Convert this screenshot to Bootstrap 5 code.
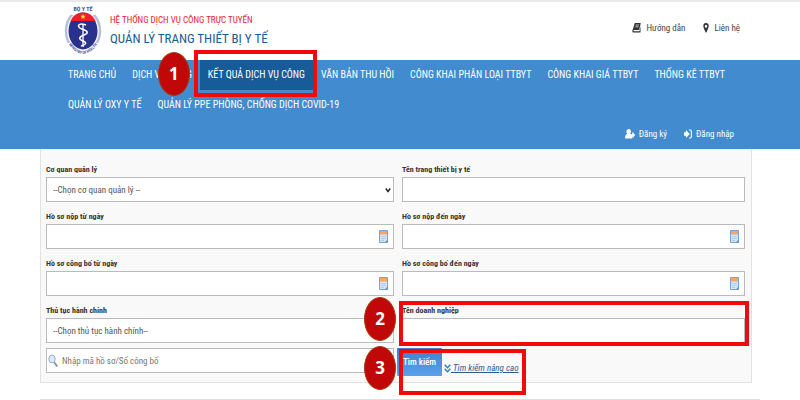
<!DOCTYPE html>
<html lang="vi">
<head>
<meta charset="utf-8">
<meta name="viewport" content="width=device-width, initial-scale=1">
<title>Quản lý trang thiết bị y tế</title>
<link href="https://cdn.jsdelivr.net/npm/bootstrap@5.3.0/dist/css/bootstrap.min.css" rel="stylesheet">
<style>
body{font-family:"Roboto Condensed",Roboto,sans-serif;font-size:9px;line-height:14px;color:#333;background:#fff}
.topbar{border-top:2px solid #e9e9e9;height:60px;padding:0 60px 0 64px}
.topbar a{color:#444}
.brand-sub{font-size:9px;line-height:16px;color:#e8222d}
.brand-title{font-size:13px;line-height:22px;font-weight:400;color:#1b5a96;margin:0}
.emblem{width:38px;height:54px}
.toplinks{gap:18px;padding-bottom:6px}
.toplinks a{gap:5px}
.mainbar{background:#428bce;padding:0 48px 0 60px}
.mainmenu .nav-link{color:#fff;font-size:10px;line-height:14px;font-weight:400;padding:8px}
.mainmenu .nav-link.active{background:#175b98}
.userlinks{gap:17px;padding:7px 18px 8px}
.userlinks a{color:#fff}
.panel-wrap{padding:0 6% 0 5%}
.filter{background:#f9f9f9;border:1px solid #e2e2e2;border-top:0;padding:14px 6px 6px 5px}
.fields{display:grid;grid-template-columns:348fr 343fr;column-gap:8px;row-gap:8px}
.fields label{display:block;font-size:8px;line-height:14px;font-weight:700;color:#333}
.fields .form-control,.fields .form-select{font-size:9px;line-height:14px;height:25px;min-height:0;padding:0 8px;border:1px solid #b9bcbe;border-radius:0;color:#555;background-color:#fff}
.fields .form-select{appearance:none;padding-right:20px;padding-left:6px;background-image:url("data:image/svg+xml,%3Csvg xmlns='http://www.w3.org/2000/svg' viewBox='0 0 8 6'%3E%3Cpath d='M1 1l3 4 3-4' fill='none' stroke='%23222' stroke-width='1.8'/%3E%3C/svg%3E");background-size:6px 6px;background-position:right 2px center}
.fields input::placeholder{color:#777;opacity:1}
.fields .code-input{padding-left:15px}
.in-icon{position:absolute;right:6px;top:6px;width:9px;height:13px}
.lens{position:absolute;left:2px;top:6px;width:10px;height:14px}
.last-row{margin-top:-3px}
.actions{margin-left:-5px;gap:2px}
.btn-search{background:linear-gradient(#3f7dd0,#58a2ec);color:#fff;font-size:9px;line-height:16px;font-weight:500;border:0;border-radius:1px;padding:6px 4px;min-width:45px}
.btn-search:hover{color:#fff;background:#3f7dd0}
.adv{color:#285d8c;font-style:italic;line-height:14px;margin-top:13px}
.mark-box{position:absolute;border:4px solid #f20a0a;pointer-events:none;z-index:2}
.box-menu{inset:-10px -4px -7px -6px}
.box-field{inset:-3px -4px -3px -3px}
.box-search{left:2px;top:1px;width:127px;height:46px}
.step{position:absolute;z-index:3;width:32px;height:44px;border-radius:50%;background:#c00808;border:1px solid #a53a10;color:#fff;font:700 17px/42px "Open Sans",sans-serif;text-align:center;pointer-events:none}
.step-one{left:-42px;top:-8px}
.step-two{left:-38px;top:-7px}
.step-three{left:-33px;top:-2px}
.bottom-rule{margin:16px 5% 0;border-top:1px solid #ddd}
</style>
</head>
<body>
<header class="topbar d-flex justify-content-between align-items-center">
  <div class="d-flex align-items-center gap-2">
    <svg class="emblem" viewBox="0 0 38 54" role="img" aria-label="Bộ Y Tế">
      <defs><path id="arcBottom" d="M3 38Q19 62 35 38"/></defs>
      <ellipse cx="19" cy="27" rx="17" ry="21" fill="none" stroke="#b9bedb" stroke-width="2.500"/>
      <path d="M8 1H30L31 11H7zM3 39L35 39 28 53H10z" fill="#fff"/>
      <ellipse cx="19" cy="27" rx="14.500" ry="18.500" fill="#29318d"/>
      <path d="M6.500 17Q10 8.500 19 8.500T31.500 17z" fill="#ed2028"/>
      <path d="M19 10l.8 1.800h1.800l-1.400 1.300.5 1.900-1.700-1.100-1.700 1.100.5-1.900-1.400-1.300h1.800z" fill="#ffe033"/>
      <path d="M19 20V43" stroke="#fff" stroke-width="1.300"/>
      <path d="M22 21C14 18 12 23 18 25S25 29 20 31 14 35 19 37 21 41 17 42" fill="none" stroke="#fff" stroke-width="1.600"/>
      <text x="19" y="7" text-anchor="middle" font-size="6" fill="#4b528f" font-weight="700">BỘ Y TẾ</text>
      <text font-size="4" fill="#4b528f" font-weight="700"><textPath href="#arcBottom" startOffset="50%" text-anchor="middle">MINISTRY OF HEALTH</textPath></text>
    </svg>
    <div>
      <div class="brand-sub">HỆ THỐNG DỊCH VỤ CÔNG TRỰC TUYẾN</div>
      <h1 class="brand-title">QUẢN LÝ TRANG THIẾT BỊ Y TẾ</h1>
    </div>
  </div>
  <nav class="toplinks d-flex">
    <a href="#" class="text-decoration-none d-flex align-items-center"><svg width="9" height="10" viewBox="0 0 9 10" aria-hidden="true"><path d="M2.800 0H8.800L7.200 7H1.800Q1 8 2 8.300H7.500L8.500 3V9.500H1Q-.3 8.500.8 6.500z" fill="#333"/><path d="M3.700 2h3.300M3.300 3.800h3.300" stroke="#fff" stroke-width=".7"/></svg>Hướng dẫn</a>
    <a href="#" class="text-decoration-none d-flex align-items-center"><svg width="6" height="10" viewBox="0 0 6 10" aria-hidden="true"><path fill-rule="evenodd" d="M3 0A2.700 3.200 0 0 1 5.700 3.200Q5.600 5 3 10 .4 5 .3 3.200A2.700 3.200 0 0 1 3 0zM3 1.700A1.200 1.500 0 1 0 3 4.700 1.200 1.500 0 0 0 3 1.700z" fill="#333"/></svg>Liên hệ</a>
  </nav>
</header>

<div class="mainbar">
  <ul class="nav mainmenu">
    <li class="nav-item"><a class="nav-link" href="#">TRANG CHỦ</a></li>
    <li class="nav-item"><a class="nav-link" href="#">DỊCH VỤ CÔNG</a></li>
    <li class="nav-item position-relative"><a class="nav-link active" aria-current="page" href="#">KẾT QUẢ DỊCH VỤ CÔNG</a><span class="mark-box box-menu"></span><span class="step step-one">1</span></li>
    <li class="nav-item"><a class="nav-link" href="#">VĂN BẢN THU HỒI</a></li>
    <li class="nav-item"><a class="nav-link" href="#">CÔNG KHAI PHÂN LOẠI TTBYT</a></li>
    <li class="nav-item"><a class="nav-link" href="#">CÔNG KHAI GIÁ TTBYT</a></li>
    <li class="nav-item"><a class="nav-link" href="#">THỐNG KÊ TTBYT</a></li>
    <li class="nav-item"><a class="nav-link" href="#">QUẢN LÝ OXY Y TẾ</a></li>
    <li class="nav-item"><a class="nav-link" href="#">QUẢN LÝ PPE PHÒNG, CHỐNG DỊCH COVID-19</a></li>
  </ul>
  <div class="userlinks d-flex justify-content-end">
    <a href="#" class="text-decoration-none d-flex align-items-center"><svg class="me-1" width="10" height="10" viewBox="0 0 10 10" aria-hidden="true"><path d="M3.700 0a2.200 2.600 0 0 1 1.400 4.700Q7.300 5.500 7.300 9.500H0Q0 5.500 2.300 4.700A2.200 2.600 0 0 1 3.700 0z" fill="#fff"/><path d="M8 3.500v5M6 6H10" stroke="#fff" stroke-width="1.600"/></svg>Đăng ký</a>
    <a href="#" class="text-decoration-none d-flex align-items-center"><svg class="me-1" width="8" height="10" viewBox="0 0 8 10" aria-hidden="true"><path d="M0 3.300h2V1L5.700 5 2 9V6.700H0z" fill="#fff"/><path d="M5 1h1.200Q7.400 1 7.400 2.500v5Q7.400 9 6.200 9H5" fill="none" stroke="#fff" stroke-width="1.100"/></svg>Đăng nhập</a>
  </div>
</div>

<svg class="d-none" aria-hidden="true">
  <symbol id="cal" viewBox="0 0 9 13"><path d="M.5.5h8v12h-8z" fill="#d3e4f7" stroke="#7d9fc9"/><path d="M1 1h7v3.500H1z" fill="#f3a66c"/><path d="M2 6.500h5M2 8.500h5M2 10.500h3" stroke="#a9c5e6" stroke-width=".8"/><path d="M6 12.500h2.500V9.500z" fill="#6289bd"/></symbol>
</svg>

<main>
  <div class="panel-wrap">
    <form class="filter">
      <div class="fields">
        <div><label for="agency">Cơ quan quản lý</label><select id="agency" class="form-select"><option>--Chọn cơ quan quản lý --</option></select></div>
        <div><label for="device">Tên trang thiết bị y tế</label><input id="device" type="text" class="form-control"></div>
        <div><label for="subFrom">Hồ sơ nộp từ ngày</label><div class="position-relative"><input id="subFrom" type="text" class="form-control"><svg class="in-icon" aria-hidden="true"><use href="#cal"/></svg></div></div>
        <div><label for="subTo">Hồ sơ nộp đến ngày</label><div class="position-relative"><input id="subTo" type="text" class="form-control"><svg class="in-icon" aria-hidden="true"><use href="#cal"/></svg></div></div>
        <div><label for="pubFrom">Hồ sơ công bố từ ngày</label><div class="position-relative"><input id="pubFrom" type="text" class="form-control"><svg class="in-icon" aria-hidden="true"><use href="#cal"/></svg></div></div>
        <div><label for="pubTo">Hồ sơ công bố đến ngày</label><div class="position-relative"><input id="pubTo" type="text" class="form-control"><svg class="in-icon" aria-hidden="true"><use href="#cal"/></svg></div></div>
        <div><label for="procedure">Thủ tục hành chính</label><select id="procedure" class="form-select"><option>--Chọn thủ tục hành chính--</option></select></div>
        <div class="position-relative"><label for="company">Tên doanh nghiệp</label><input id="company" type="text" class="form-control"><span class="mark-box box-field"></span><span class="step step-two">2</span></div>
        <div class="last-row position-relative"><input type="text" class="form-control code-input" aria-label="Mã hồ sơ/Số công bố" placeholder="Nhập mã hồ sơ/Số công bố"><svg class="lens" viewBox="0 0 10 14" aria-hidden="true"><path d="M6 8l3.300 4.500" stroke="#8b8f96" stroke-width="1.800"/><ellipse cx="4" cy="5" rx="3.200" ry="4" fill="#dbe9f7" stroke="#9fb0c6"/></svg></div>
        <div class="last-row actions d-flex align-items-start position-relative">
          <button type="button" class="btn btn-search">Tìm kiếm</button>
          <a href="#" class="adv d-flex align-items-center"><svg width="7" height="9" viewBox="0 0 7 9" aria-hidden="true"><path d="M.7.700l2.800 3 2.800-3M.7 4.700l2.800 3 2.800-3" fill="none" stroke="#2f7fd0" stroke-width="1.500"/></svg><span>&nbsp;Tìm kiếm nâng cao</span></a>
          <span class="mark-box box-search"></span><span class="step step-three">3</span>
        </div>
      </div>
    </form>
  </div>
  <div class="bottom-rule"></div>
</main>
<script src="https://cdn.jsdelivr.net/npm/bootstrap@5.3.0/dist/js/bootstrap.bundle.min.js"></script>
</body>
</html>
